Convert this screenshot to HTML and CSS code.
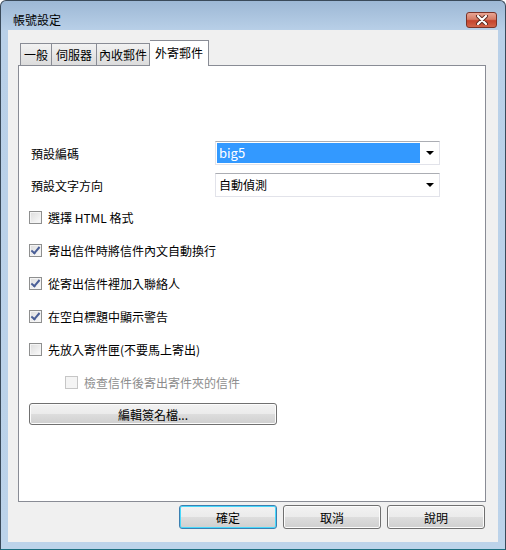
FILE: index.html
```html
<!DOCTYPE html>
<html lang="zh-Hant">
<head>
  <meta charset="UTF-8">
  <title>帳號設定</title>
  <link rel="stylesheet" href="styles.css">
</head>
<body>
  <div class="window">
    <div class="titlebar">
      <span class="title">帳號設定</span>
      <div class="close-btn">
        <svg width="16" height="10" viewBox="0 0 16 10">
          <path d="M4 1 L12 9 M12 1 L4 9" stroke="#5a2a20" stroke-width="4" stroke-linecap="round"/>
          <path d="M4 1 L12 9 M12 1 L4 9" stroke="#ffffff" stroke-width="2.2" stroke-linecap="round"/>
        </svg>
      </div>
    </div>

    <div class="client">
      <div class="tabs">
        <div class="tab tab-general">一般</div>
        <div class="tab tab-server">伺服器</div>
        <div class="tab tab-inbox">內收郵件</div>
        <div class="tab tab-outbox active">外寄郵件</div>
      </div>

      <div class="panel">
        <div class="field-row">
          <label class="field-label">預設編碼</label>
          <div class="combo">
            <span class="combo-value selected">big5</span>
            <span class="combo-arrow"></span>
          </div>
        </div>
        <div class="field-row">
          <label class="field-label">預設文字方向</label>
          <div class="combo">
            <span class="combo-value">自動偵測</span>
            <span class="combo-arrow"></span>
          </div>
        </div>

        <div class="check-row"><span class="checkbox"></span>選擇 HTML 格式</div>
        <div class="check-row"><span class="checkbox checked"></span>寄出信件時將信件內文自動換行</div>
        <div class="check-row"><span class="checkbox checked"></span>從寄出信件裡加入聯絡人</div>
        <div class="check-row"><span class="checkbox checked"></span>在空白標題中顯示警告</div>
        <div class="check-row"><span class="checkbox"></span>先放入寄件匣(不要馬上寄出)</div>
        <div class="check-row sub disabled"><span class="checkbox"></span>檢查信件後寄出寄件夾的信件</div>

        <button class="btn sig-btn">編輯簽名檔...</button>
      </div>

      <div class="actions">
        <button class="btn default">確定</button>
        <button class="btn">取消</button>
        <button class="btn">說明</button>
      </div>
    </div>
  </div>
</body>
</html>
```

FILE: styles.css
```css
body {
  margin: 0;
  font-family: "Noto Sans CJK TC", "Noto Sans", sans-serif;
  font-size: 12px;
  color: #000;
  background: #fff;
}
.window {
  width: 506px;
  height: 550px;
  box-sizing: border-box;
  border: 1px solid #3a4a5a;
  border-bottom-color: #1d6f80;
  border-radius: 6px 6px 0 0;
  background: linear-gradient(to bottom, #9db8d5 0, #b9d0e8 30px, #bcd3ea 100%);
  display: flex;
  flex-direction: column;
}
.titlebar {
  height: 29px;
  display: flex;
  align-items: center;
  padding: 0 8px 0 12px;
}
.title {
  flex: 1;
  color: #000;
  padding-top: 7px;
}
.close-btn {
  width: 31px;
  height: 16px;
  box-sizing: border-box;
  margin-top: 8px;
  border: 1px solid #7a3328;
  border-radius: 3px;
  background: linear-gradient(to bottom, #e9a594 0, #d67c66 45%, #c5432c 55%, #d2654a 100%);
  display: flex;
  align-items: center;
  justify-content: center;
}
.client {
  flex: 1;
  margin: 0 7px 7px 7px;
  background: #f0f0f0;
  padding: 10px 12px 0 10px;
  display: flex;
  flex-direction: column;
}
.tabs {
  display: flex;
  align-items: flex-end;
  height: 25px;
  padding-left: 2px;
  position: relative;
  z-index: 1;
}
.tab {
  height: 22px;
  box-sizing: border-box;
  padding-top: 2px;
  text-align: center;
  border: 1px solid #898c95;
  border-bottom: none;
  border-right: none;
  background: linear-gradient(to bottom, #f2f2f2, #dcdcdc);
  line-height: 18px;
}
.tab-general { width: 31px; }
.tab-server { width: 45px; }
.tab-inbox {
  width: 54px;
  border-right: 1px solid #898c95;
}
.tab.active {
  width: 59px;
  height: 26px;
  margin-bottom: -1px;
  padding-top: 3px;
  background: #fff;
  border-right: 1px solid #898c95;
  border-left: none;
}
.panel {
  height: 437px;
  box-sizing: border-box;
  border: 1px solid #898c95;
  background: #fff;
  padding: 75px 0 0 10px;
}
.field-row {
  display: flex;
  align-items: center;
  height: 24px;
  margin-bottom: 8px;
}
.field-label {
  width: 186px;
  padding-left: 2px;
  box-sizing: border-box;
}
.combo {
  width: 225px;
  height: 24px;
  box-sizing: border-box;
  border: 1px solid #e2e3ea;
  border-top-color: #abadb3;
  display: flex;
  align-items: center;
  padding: 1px;
}
.combo-value {
  flex: 1;
  height: 20px;
  line-height: 20px;
  padding-left: 2px;
  margin-right: 6px;
}
.combo-value.selected {
  background: #3399ff;
  color: #fff;
  font-size: 13px;
}
.combo-arrow {
  width: 0;
  height: 0;
  border-left: 4px solid transparent;
  border-right: 4px solid transparent;
  border-top: 4px solid #000;
  margin-right: 4px;
}
.check-row {
  display: flex;
  align-items: center;
  height: 33px;
}
.field-row + .check-row {
  margin-top: -4px;
}
.check-row.sub {
  padding-left: 36px;
}
.check-row.disabled {
  color: #8d8d8d;
}
.checkbox {
  width: 13px;
  height: 13px;
  box-sizing: border-box;
  border: 1px solid #8e8f8f;
  background: linear-gradient(135deg, #dcdcdc, #fbfbfb);
  box-shadow: inset 0 0 0 1px #f4f4f4;
  margin-right: 6px;
  position: relative;
}
.check-row.disabled .checkbox {
  border-color: #c6c6c6;
  background: #f4f4f4;
}
.checkbox.checked::after {
  content: "";
  position: absolute;
  left: 3px;
  top: 0px;
  width: 3px;
  height: 7px;
  border-right: 2px solid #4a5f97;
  border-bottom: 2px solid #4a5f97;
  transform: rotate(40deg);
}
.btn {
  font-family: inherit;
  font-size: 12px;
  color: #000;
  border: 1px solid #707070;
  border-radius: 3px;
  background: linear-gradient(to bottom, #f2f2f2 0, #ebebeb 50%, #dddddd 51%, #cfcfcf 100%);
  box-shadow: inset 0 0 0 1px #fcfcfc;
  padding: 0;
}
.sig-btn {
  display: block;
  width: 248px;
  height: 22px;
  margin-top: 4px;
}
.actions {
  display: flex;
  justify-content: flex-end;
  gap: 6px;
  margin-top: 3px;
  padding-right: 1px;
}
.actions .btn {
  width: 98px;
  height: 24px;
}
.actions .btn.default {
  border-color: #3c7fb1;
  box-shadow: inset 0 0 0 1px #48d8fb;
}
```
